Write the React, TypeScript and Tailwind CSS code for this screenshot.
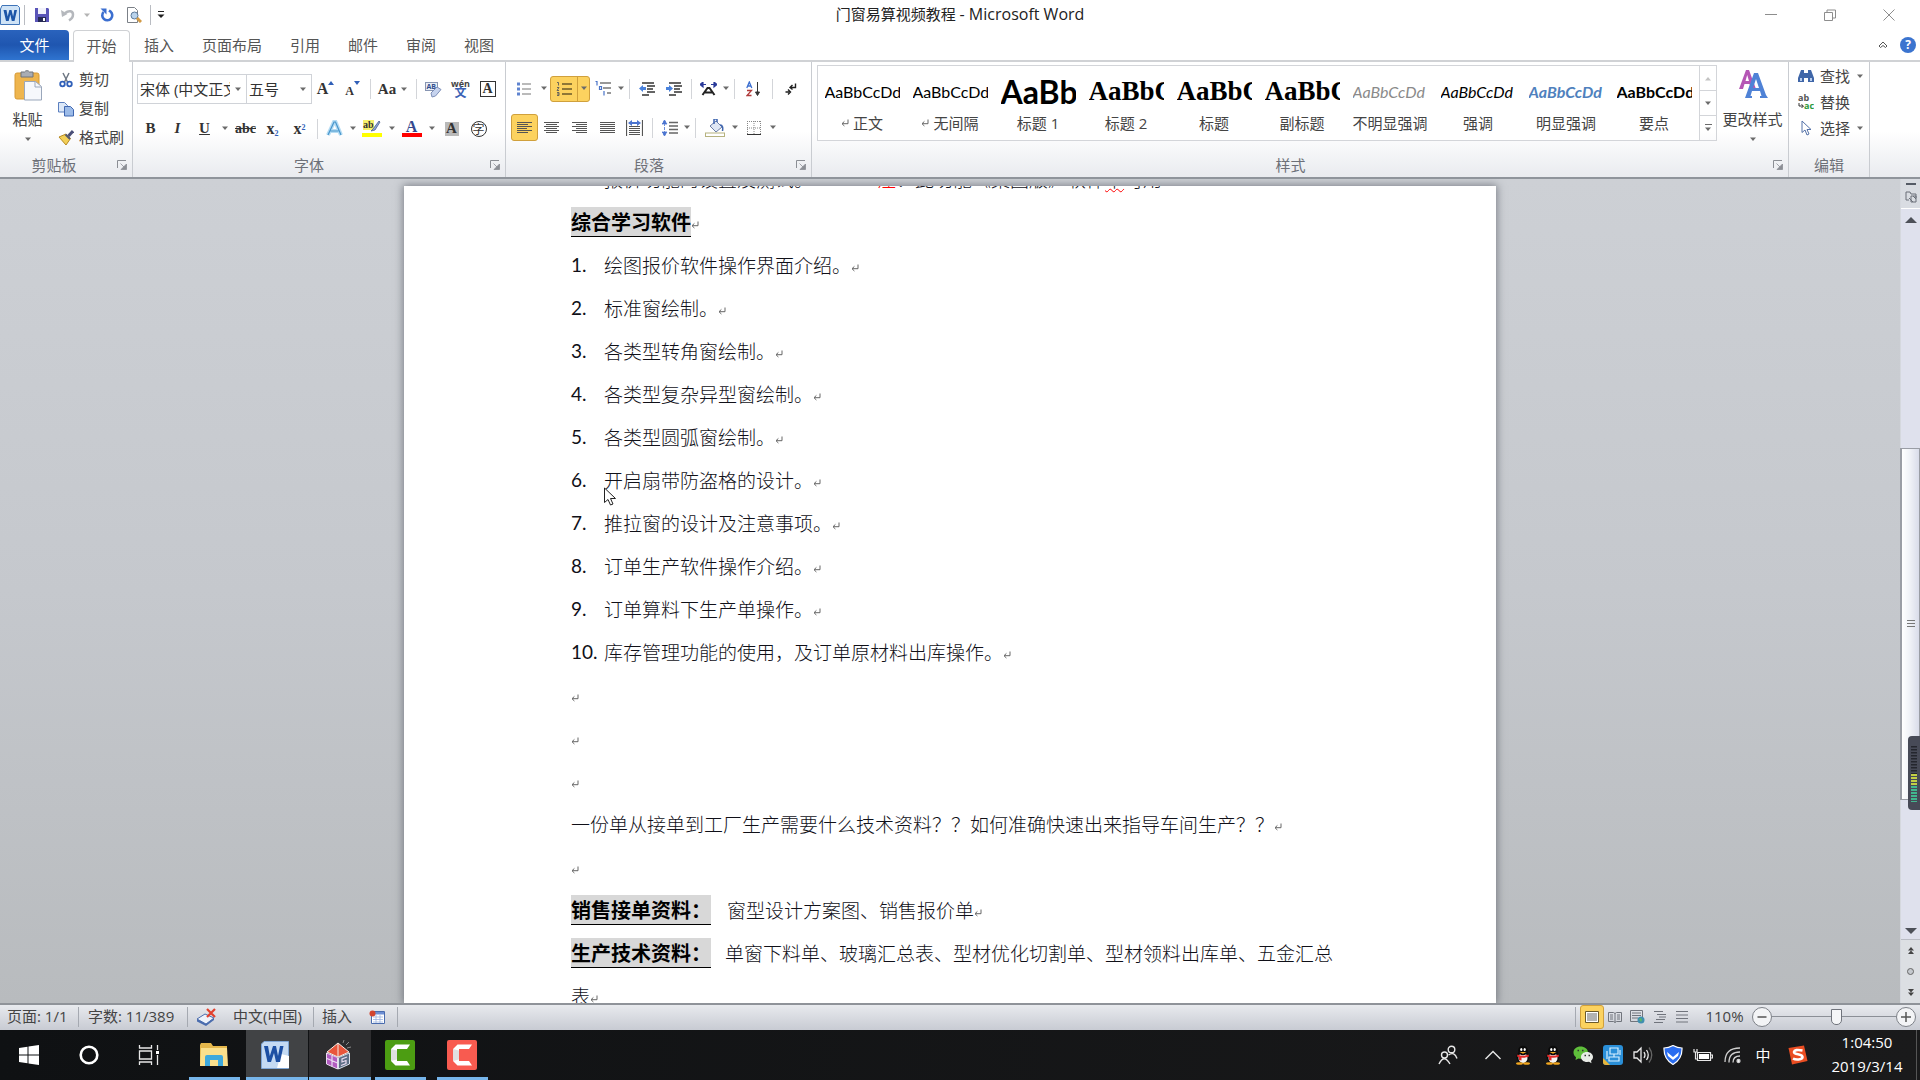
import React from 'react'
import clsx from 'clsx'

const UI = 'font-["Open_Sans","Noto_Sans_CJK_SC",sans-serif]'

type BoxProps = { className?: string; children?: React.ReactNode }

/* ---------- small shared pieces ---------- */

const Arrow: React.FC<{ className?: string }> = ({ className }) => (
  <svg viewBox="0 0 8 5" className={clsx('h-[5px] w-2 shrink-0', className)}>
    <path d="M1 0.5h6L4 4z" fill="#6b6b6b" />
  </svg>
)

const Sep: React.FC = () => (
  <div className="flex w-2 shrink-0 justify-center">
    <div className="h-5 w-px bg-[#d3d5d9]"></div>
  </div>
)

const Tool: React.FC<BoxProps & { label: string }> = ({ label, className, children }) => (
  <button aria-label={label} className={clsx('flex h-[27px] shrink-0 items-center justify-center', className ? className : 'w-[27px]')}>
    {children}
  </button>
)

const Pilcrow: React.FC<{ className?: string }> = ({ className }) => (
  <svg viewBox="0 0 8 8" className={clsx('inline-block h-2 w-2', className)}>
    <path d="M7 0.5v4.2H1.2M3.4 2.4L1 4.7l2.4 2.3" fill="none" stroke="#666" strokeWidth="1" />
  </svg>
)

const Group: React.FC<BoxProps & { name: string; launcher?: boolean }> = ({ name, launcher, className, children }) => (
  <section className={clsx('relative flex flex-col border-r border-[#c9ccd1]', className)}>
    <div className="flex-1">{children}</div>
    <div className={clsx('text-center text-[15px] leading-6 text-[#6d7078]', launcher && 'pr-6')}>{name}</div>
    {launcher && (
      <button aria-label={name + '设置'} className="absolute right-[5px] bottom-[7px]">
        <svg viewBox="0 0 10 10" className="h-[10px] w-[10px]">
          <path d="M0.5 8V0.5H9" fill="none" stroke="#8b8e94" />
          <path d="M9.5 4v5.5H4zM3.5 3.5L8 8" fill="#8b8e94" stroke="#8b8e94" strokeWidth="0.8" />
        </svg>
      </button>
    )}
  </section>
)

/* ---------- title bar ---------- */

const QuickAccess: React.FC = () => (
  <div className="flex flex-1 items-center">
    <svg viewBox="0 0 20 20" className="h-5 w-5">
      <path d="M2 0.5h15.500l2 2v17H0.500V4z" fill="#cfe3f6" stroke="#3f74b8" />
      <path d="M3.500 5h3l1.200 6.500L9.300 5h2.200l1.600 6.500L14.300 5h2.700l-2.500 11h-2.700l-1.500-6.500L8.700 16H6z" fill="#1d56a8" />
    </svg>
    <div className="ml-1 h-5 w-px bg-[#b9bcc2]"></div>
    <button aria-label="保存" className="ml-[9px]">
      <svg viewBox="0 0 16 16" className="h-4 w-4">
        <path d="M1 1h13l1 1v13H1z" fill="#5a55b8" />
        <path d="M4 1h8v6H4z" fill="#f2f2fb" />
        <path d="M4 10h8v5H4z" fill="#262a55" />
        <path d="M9 11h2v3H9z" fill="#fff" />
      </svg>
    </button>
    <button aria-label="撤消" className="ml-[11px]">
      <svg viewBox="0 0 14 14" className="h-[14px] w-[14px]">
        <path d="M4 5c4-3 8-2 8 1.500 0 2.500-1.500 4.500-4 6" fill="none" stroke="#b5b8bd" strokeWidth="2.500" />
        <path d="M0 2l1 7 5.500-3z" fill="#b5b8bd" />
      </svg>
    </button>
    <Arrow className="ml-2 opacity-50" />
    <button aria-label="重复" className="ml-[9px]">
      <svg viewBox="0 0 14 14" className="h-[14px] w-[14px]">
        <path d="M3.500 4a5 5 0 1 0 7-0.500L9 2.500" fill="none" stroke="#3c6fd0" strokeWidth="2.600" />
        <path d="M0.500 0.500h6v6z" fill="#3c6fd0" />
      </svg>
    </button>
    <button aria-label="打印预览" className="ml-3">
      <svg viewBox="0 0 16 16" className="h-4 w-4">
        <path d="M1.500 0.500h7l3 3v12h-10z" fill="#fff" stroke="#7b8087" />
        <circle cx="8.500" cy="8.500" r="3.500" fill="#b9d3ec" stroke="#5c7a99" />
        <path d="M11 11l4 4" stroke="#d29a45" strokeWidth="3" />
      </svg>
    </button>
    <div className="ml-2 h-5 w-px bg-[#b9bcc2]"></div>
    <button aria-label="自定义快速访问工具栏" className="ml-[6px]">
      <svg viewBox="0 0 8 8" className="h-2 w-2">
        <path d="M1 0.500h6" stroke="#222" />
        <path d="M0.500 3.500h7L4 7z" fill="#222" />
      </svg>
    </button>
  </div>
)

const TitleBar: React.FC = () => (
  <header className="flex h-[30px] shrink-0 items-center">
    <div className="flex h-[25px] flex-1">
      <QuickAccess />
    </div>
    <h1 className="-mt-0.5 text-[15px] text-[#222]">
      门窗易算视频教程 <span className="text-base">- Microsoft Word</span>
    </h1>
    <div className="flex flex-1 items-center justify-end gap-[47px] text-[#8d8d8d]">
      <button aria-label="最小化">
        <svg viewBox="0 0 12 12" className="h-3 w-3"><path d="M0 5.500h12" stroke="currentColor" /></svg>
      </button>
      <button aria-label="向下还原">
        <svg viewBox="0 0 12 12" className="h-3 w-3">
          <path d="M0.500 3.500h8v8h-8zM3 3V1h8.500v8H9" fill="none" stroke="currentColor" />
        </svg>
      </button>
      <button aria-label="关闭" className="mr-[25px]">
        <svg viewBox="0 0 12 12" className="h-3 w-3"><path d="M0.500 0.500l11 11M11.500 0.500l-11 11" stroke="currentColor" /></svg>
      </button>
    </div>
  </header>
)

const tabs = ['插入', '页面布局', '引用', '邮件', '审阅', '视图']

const TabRow: React.FC = () => (
  <nav className="flex h-8 shrink-0 items-stretch border-b-2 border-[#d0d2d5] text-[15px] text-[#555]">
    <button className="w-[69px] rounded-tr-sm bg-linear-to-b from-[#2a63bd] via-[#1f56b0] to-[#2f74d0] text-white">文件</button>
    <button className="-mb-0.5 ml-1 w-[57px] rounded-t-sm border border-b-0 border-[#cfd1d4] bg-white">开始</button>
    {tabs.map((t) => (
      <button key={t} className="px-[14px]">
        {t}
      </button>
    ))}
    <div className="flex flex-1 items-center justify-end gap-3 pr-1">
      <button aria-label="功能区最小化">
        <svg viewBox="0 0 10 8" className="h-2 w-[10px]">
          <path d="M1 5l4-4 4 4-1.500 1.500L5 4.500 2.500 6.500z" fill="none" stroke="#555" />
        </svg>
      </button>
      <button aria-label="帮助" className="flex h-4 w-4 items-center justify-center rounded-full bg-[#3b74cf] text-xs font-bold text-white">
        ?
      </button>
    </div>
  </nav>
)

/* ---------- ribbon ---------- */

const ClipboardGroup: React.FC = () => (
  <Group name="剪贴板" launcher className="w-[133px]">
    <div className="flex text-[15px] text-[#444]">
      <button className="flex w-[55px] flex-col items-center pt-[7px]">
        <svg viewBox="0 0 28 32" className="h-8 w-7">
          <rect x="1" y="4" width="24" height="26" rx="2" fill="#eeb54e" stroke="#d79a35" />
          <path d="M7 3h3.500a3 3 0 0 1 5 0H19v5H7z" fill="#a9adb4" stroke="#70747b" />
          <path d="M10.500 12.500h11l6 5v13.500h-17z" fill="#f6f8fc" stroke="#9aa7bb" />
          <path d="M21 12.500v5.500h6" fill="none" stroke="#9aa7bb" />
        </svg>
        <span className="mt-[6px] leading-6">粘贴</span>
        <Arrow className="mt-[6px]" />
      </button>
      <div className="flex flex-col items-start pt-[3px]">
        <button className="flex h-[29px] items-center gap-[5px] pl-[3px]">
          <svg viewBox="0 0 16 16" className="h-4 w-4">
            <path d="M5 1l4.500 9M11 1L6.500 10" stroke="#6f7884" strokeWidth="1.500" />
            <circle cx="4.500" cy="12" r="2.300" fill="none" stroke="#2f5fb8" strokeWidth="1.800" />
            <circle cx="11.500" cy="12" r="2.300" fill="none" stroke="#2f5fb8" strokeWidth="1.800" />
          </svg>
          剪切
        </button>
        <button className="flex h-[29px] items-center gap-[5px] pl-[3px]">
          <svg viewBox="0 0 16 16" className="h-4 w-4">
            <path d="M0.500 1.500h6l3 3v6.500h-9z" fill="#dce8f8" stroke="#5b7fbf" />
            <path d="M6.500 5.500h6l3 3v6.500h-9z" fill="#9cbbe8" stroke="#3f66b0" />
          </svg>
          复制
        </button>
        <button className="flex h-[29px] items-center gap-[5px] pl-[3px]">
          <svg viewBox="0 0 16 16" className="h-4 w-4">
            <path d="M15 1l-4.500 5" stroke="#4a4f78" strokeWidth="3" />
            <path d="M1 7l7-3 4.500 4.500L8 15z" fill="#f2cf57" stroke="#b78b22" />
            <path d="M7.500 4.500l4.500 4.500" stroke="#555a6e" strokeWidth="2" />
          </svg>
          格式刷
        </button>
      </div>
    </div>
  </Group>
)

const FontGroup: React.FC = () => (
  <Group name="字体" launcher className="w-[373px] pl-1">
    <div className="flex items-center pt-3">
      <div className="flex h-[30px] text-[15px] text-[#333]">
        <label className="relative flex w-[110px] items-center border border-[#d0d3d8]">
          <select aria-label="字体" className="w-[92px] appearance-none overflow-hidden pl-0.5 whitespace-nowrap outline-none">
            <option>宋体 (中文正文)</option>
          </select>
          <Arrow className="absolute right-1" />
        </label>
        <label className="relative -ml-px flex w-[66px] items-center border border-[#d0d3d8]">
          <select aria-label="字号" className="w-12 appearance-none pl-0.5 outline-none">
            <option>五号</option>
          </select>
          <Arrow className="absolute right-1" />
        </label>
      </div>
      <Tool label="增大字体">
        <span className="font-['Liberation_Serif',serif] text-base font-bold text-[#333]">A</span>
        <svg viewBox="0 0 6 4" className="-mt-3 h-1 w-[6px]"><path d="M0 4l3-4 3 4z" fill="#2f5fb8" /></svg>
      </Tool>
      <Tool label="缩小字体">
        <span className="mt-1 font-['Liberation_Serif',serif] text-xs font-bold text-[#333]">A</span>
        <svg viewBox="0 0 6 4" className="-mt-3 h-1 w-[6px]"><path d="M0 0l3 4 3-4z" fill="#2f5fb8" /></svg>
      </Tool>
      <Sep />
      <Tool label="更改大小写" className="w-[38px] gap-1">
        <span className="font-['Liberation_Serif',serif] text-[15px] font-bold text-[#333]">Aa</span>
        <Arrow />
      </Tool>
      <Sep />
      <Tool label="清除格式">
        <svg viewBox="0 0 17 17" className="h-[17px] w-[17px]">
          <rect x="0.500" y="1.500" width="12" height="8" fill="#e9edf5" stroke="#8795b2" />
          <text x="1.500" y="8" fontSize="7" fontWeight="bold" fill="#2f4f8f">AB</text>
          <path d="M6 12l6-6 4 2.500-5.500 6.500L7 16z" fill="#c6d3ee" stroke="#7d8fb8" />
        </svg>
      </Tool>
      <Tool label="拼音指南" className="w-[27px] flex-col">
        <span className="text-[9px] leading-[6px] font-bold text-[#444]">wén</span>
        <span className="text-xs leading-[11px] font-bold text-[#3a62b5]">文</span>
      </Tool>
      <Tool label="字符边框">
        <span className="flex h-4 w-4 items-center justify-center border border-[#333] font-['Liberation_Serif',serif] text-sm font-bold text-[#333]">A</span>
      </Tool>
    </div>
    <div className="flex items-center pt-[11px] font-['Liberation_Serif',serif] text-[#333]">
      <Tool label="加粗"><b className="text-[15px]">B</b></Tool>
      <Tool label="倾斜"><b className="text-[15px] italic">I</b></Tool>
      <Tool label="下划线"><b className="text-[15px] underline">U</b></Tool>
      <Tool label="下划线类型" className="w-[14px]"><Arrow /></Tool>
      <Tool label="删除线"><b className="text-sm line-through">abc</b></Tool>
      <Tool label="下标"><b className="text-base">x<sub className="text-[8px] text-[#2f5fb8]">2</sub></b></Tool>
      <Tool label="上标"><b className="text-base">x<sup className="text-[8px] text-[#2f5fb8]">2</sup></b></Tool>
      <Sep />
      <Tool label="文本效果">
        <svg viewBox="0 0 17 17" className="h-[17px] w-[17px]">
          <path d="M2 15L8 2h1.500l5.500 13M4.500 11h8" fill="none" stroke="#b5dcf3" strokeWidth="4" />
          <path d="M2 15L8 2h1.500l5.500 13M4.500 11h8" fill="none" stroke="#4795cc" strokeWidth="1.200" />
        </svg>
      </Tool>
      <Tool label="文本效果选项" className="w-[10px]"><Arrow /></Tool>
      <Tool label="突出显示">
        <span className="flex w-5 flex-col">
          <svg viewBox="0 0 20 13" className="h-[13px] w-5">
            <rect x="1" y="0" width="11" height="10" fill="#f6f06a" />
            <text x="1" y="8" fontSize="10" fontWeight="bold" fill="#333">ab</text>
            <path d="M17 1l-6 8-2 2 4-1 5-8z" fill="#8ba6d8" stroke="#4c5f8d" strokeWidth="0.800" />
          </svg>
          <span className="h-1 bg-[#ffff00]"></span>
        </span>
      </Tool>
      <Tool label="突出显示颜色" className="w-[13px]"><Arrow /></Tool>
      <Tool label="字体颜色">
        <span className="flex w-5 flex-col items-center">
          <b className="text-base leading-[13px] text-[#34498f]">A</b>
          <span className="h-1 w-5 bg-[#ff0000]"></span>
        </span>
      </Tool>
      <Tool label="字体颜色选项" className="w-[13px]"><Arrow /></Tool>
      <Tool label="字符底纹">
        <b className="flex h-[14px] w-[14px] items-center justify-center bg-[#b9b9b9] text-[15px]">A</b>
      </Tool>
      <Tool label="带圈字符">
        <span className="flex h-4 w-4 items-center justify-center rounded-full border border-[#333] font-['Noto_Sans_CJK_SC',sans-serif] text-xs leading-none">字</span>
      </Tool>
    </div>
  </Group>
)

const alignPaths = {
  left: 'M0 1.500h15M0 3.500h11M0 5.500h15M0 7.500h10M0 9.500h15M0 11.500h11',
  center: 'M0 1.500h15M2 3.500h11M0 5.500h15M2 7.500h11M0 9.500h15M2 11.500h11',
  right: 'M0 1.500h15M4 3.500h11M0 5.500h15M4 7.500h11M0 9.500h15M4 11.500h11',
  full: 'M0 1.500h15M0 3.500h15M0 5.500h15M0 7.500h15M0 9.500h15M0 11.500h15',
}

const Lines: React.FC<{ d: string }> = ({ d }) => (
  <svg viewBox="0 0 15 13" className="h-[13px] w-[15px]"><path d={d} stroke="#555" strokeWidth="1.200" /></svg>
)

const IndentIcon: React.FC<{ out?: boolean }> = ({ out }) => (
  <svg viewBox="0 0 16 14" className="h-[14px] w-4">
    <path d="M3 1h12M8 4h8M8 7h6M8 10h8M3 13h7" stroke="#333" strokeWidth="1.600" />
    <path d={out ? 'M0 6.500l4-3.500v2h3v3H4v2z' : 'M7 6.500L3 3v2H0v3h3v2z'} fill="#4a82dc" />
  </svg>
)

const ParagraphGroup: React.FC = () => (
  <Group name="段落" launcher className="w-[306px] pl-[5px]">
    <div className="flex items-center pt-[13px]">
      <Tool label="项目符号">
        <svg viewBox="0 0 15 14" className="h-[14px] w-[15px]">
          <path d="M5 2h9M5 7h9M5 12h9" stroke="#777" strokeWidth="1.200" />
          <path d="M0 0.500h3v3H0zM0 5.500h3v3H0zM0 10.500h3v3H0z" fill="#5f84d0" />
        </svg>
      </Tool>
      <Tool label="项目符号库" className="w-3"><Arrow /></Tool>
      <span className="flex rounded-[3px] border border-[#d0a03c] bg-[#fcd25f]">
        <button aria-label="编号" className="flex h-6 w-[26px] items-center justify-center">
          <svg viewBox="0 0 16 14" className="h-[14px] w-4">
            <path d="M6 2h10M6 7h10M6 12h10" stroke="#6b5a2a" strokeWidth="1.400" />
            <path d="M1 0.500h1.500v3M1 5.500h2l-2 3h2M1 10.500h2v3H1M3 12H1" fill="none" stroke="#5a5a5a" strokeWidth="0.900" />
          </svg>
        </button>
        <button aria-label="编号库" className="flex h-6 w-3 items-center justify-center border-l border-[#d0a03c]"><Arrow /></button>
      </span>
      <Tool label="多级列表">
        <svg viewBox="0 0 17 15" className="h-[15px] w-[17px]">
          <path d="M5 2h11M8 7h8M12 12h4" stroke="#777" strokeWidth="1.300" />
          <path d="M0.500 0.500h1.500v4M4.500 5.500h2v3h-2zM9 10v4.500" fill="none" stroke="#4a74c8" strokeWidth="1.200" />
        </svg>
      </Tool>
      <Tool label="多级列表库" className="w-[8px]"><Arrow /></Tool>
      <Sep />
      <Tool label="减少缩进量"><IndentIcon out /></Tool>
      <Tool label="增加缩进量"><IndentIcon /></Tool>
      <Sep />
      <Tool label="中文版式">
        <svg viewBox="0 0 17 14" className="h-[14px] w-[17px]">
          <path d="M2.500 13l5-7h2l5 7M5 10.500h7" fill="none" stroke="#222" strokeWidth="2" />
          <path d="M0 2.500l3-2.500v5zM17 2.500l-3-2.500v5zM2 2.500h4M11 2.500h4" fill="#2a3a9a" stroke="#2a3a9a" strokeWidth="1.200" />
        </svg>
      </Tool>
      <Tool label="中文版式选项" className="w-2"><Arrow /></Tool>
      <Sep />
      <Tool label="排序" className="w-[30px]">
        <svg viewBox="0 0 15 16" className="h-4 w-[15px]">
          <path d="M0.800 7l2.500-6 2.500 6M1.500 5h3.600" fill="none" stroke="#3c6fd0" strokeWidth="1.300" />
          <path d="M1 9.500h4.500L1 14.500h4.500" fill="none" stroke="#b03a3a" strokeWidth="1.300" />
          <path d="M11.500 1v11M9.500 11l2 3.500 2-3.500z" fill="#333" stroke="#333" />
        </svg>
      </Tool>
      <Sep />
      <Tool label="显示编辑标记" className="w-[30px]">
        <svg viewBox="0 0 12 12" className="h-3 w-3">
          <path d="M10.500 0.500v4H6M7.500 2L5 4.500l2.500 2M0.500 9h4M3 6.500L5.500 9 3 11.500" fill="none" stroke="#222" strokeWidth="1.400" />
        </svg>
      </Tool>
    </div>
    <div className="flex items-center pt-3">
      <Tool label="左对齐" className="w-[27px] rounded-[3px] border border-[#d0a03c] bg-[#fcd25f]"><Lines d={alignPaths.left} /></Tool>
      <Tool label="居中"><Lines d={alignPaths.center} /></Tool>
      <Tool label="右对齐" className="w-7"><Lines d={alignPaths.right} /></Tool>
      <Tool label="两端对齐" className="w-7"><Lines d={alignPaths.full} /></Tool>
      <Tool label="分散对齐">
        <svg viewBox="0 0 17 16" className="h-4 w-[17px]">
          <path d="M0.500 0v16M16.500 0v16M3 6.500h11M3 8.500h11M3 10.500h11M3 12.500h11M3 14.500h11" stroke="#555" strokeWidth="1.200" />
          <path d="M2 3l4-3v2h5V0l4 3-4 3V4H6v2z" fill="#4a74d0" />
        </svg>
      </Tool>
      <Sep />
      <Tool label="行距">
        <svg viewBox="0 0 16 16" className="h-4 w-4">
          <path d="M7 2.500h9M7 6h9M7 9.500h9M7 13h9" stroke="#666" strokeWidth="1.300" />
          <path d="M2.500 0L5 4H0zM2.500 16L5 12H0zM2.500 3v10" fill="#4a74d0" stroke="#4a74d0" strokeWidth="0.800" strokeDasharray="3 1" />
        </svg>
      </Tool>
      <Tool label="行距选项" className="w-2"><Arrow /></Tool>
      <Sep />
      <Tool label="底纹" className="w-8">
        <svg viewBox="0 0 20 18" className="h-[18px] w-5">
          <path d="M5 7l6-5 6 6-6 5z" fill="#dfe7f4" stroke="#6a7da5" />
          <path d="M9 5V0h3v3M15 6c3 0 3 3 2.500 6" fill="none" stroke="#3f66b0" strokeWidth="1.500" />
          <rect x="0.500" y="14" width="19" height="3.500" fill="#fff" stroke="#b6b27e" />
        </svg>
      </Tool>
      <Tool label="底纹颜色" className="w-[8px]"><Arrow /></Tool>
      <Tool label="框线" className="w-[30px]">
        <svg viewBox="0 0 14 14" className="h-[14px] w-[14px]">
          <path d="M0.500 0v13M7 0v13M13.500 0v13M0 0.500h14M0 7h14" stroke="#888" strokeDasharray="1 1" />
          <path d="M0 13.500h14" stroke="#333" />
        </svg>
      </Tool>
      <Tool label="框线选项" className="w-[8px]"><Arrow /></Tool>
    </div>
  </Group>
)

const styles = [
  { name: '正文', mark: true, sample: 'AaBbCcDd', cls: 'text-base text-black' },
  { name: '无间隔', mark: true, sample: 'AaBbCcDd', cls: 'text-base text-black' },
  { name: '标题 1', sample: 'AaBb', cls: 'text-[32px] font-bold text-black' },
  { name: '标题 2', sample: 'AaBbC', cls: 'font-["Liberation_Serif",serif] text-[27px] font-bold text-black' },
  { name: '标题', sample: 'AaBbC', cls: 'font-["Liberation_Serif",serif] text-[27px] font-bold text-black' },
  { name: '副标题', sample: 'AaBbC', cls: 'font-["Liberation_Serif",serif] text-[27px] font-bold text-black' },
  { name: '不明显强调', sample: 'AaBbCcDd', cls: 'text-base text-[#8a8a8a] italic' },
  { name: '强调', sample: 'AaBbCcDd', cls: 'text-base text-black italic' },
  { name: '明显强调', sample: 'AaBbCcDd', cls: 'text-base font-bold text-[#4f81bd] italic' },
  { name: '要点', sample: 'AaBbCcDd', cls: 'text-base font-bold text-black' },
]

const StylesGroup: React.FC = () => (
  <Group name="样式" launcher className="min-w-0 flex-1 pl-[5px]">
    <div className="flex pt-[3px]">
      <div className="flex h-[76px] min-w-0 flex-1 overflow-hidden border border-[#d3d5d9] bg-white">
        {styles.map((s) => (
          <button key={s.name} className="flex w-[88px] shrink-0 flex-col items-center">
            <span className={clsx('mt-[6px] flex h-[39px] w-[75px] items-center overflow-hidden whitespace-nowrap', s.cls.includes('Serif') ? '' : 'font-["Lato",sans-serif]', s.cls)}>{s.sample}</span>
            <span className="flex items-center gap-1 text-[15px] leading-6 whitespace-nowrap text-[#444]">
              {s.mark && <Pilcrow />}
              {s.name}
            </span>
          </button>
        ))}
      </div>
      <div className="flex h-[76px] w-[17px] flex-col divide-y divide-[#d3d5d9] border border-l-0 border-[#d3d5d9]">
        <button aria-label="上一行" className="flex flex-1 items-center justify-center"><Arrow className="rotate-180 opacity-40" /></button>
        <button aria-label="下一行" className="flex flex-1 items-center justify-center"><Arrow /></button>
        <button aria-label="其他" className="flex flex-1 flex-col items-center justify-center gap-0.5">
          <span className="h-px w-[7px] bg-[#6b6b6b]"></span>
          <Arrow />
        </button>
      </div>
      <button className="flex w-[71px] flex-col items-center pt-1 text-[15px] text-[#444]">
        <svg viewBox="0 0 30 30" className="h-[30px] w-[30px]">
          <path d="M1 20L8 1h3l7 19h-5l-1.500-5H6.500L5 20zM7.500 12h3.500L9.200 6z" fill="#b556b5" />
          <path d="M7 29l9-25h4l8 22 2 3h-8v-2h1.500l-1.500-5h-8l-1.500 5H14v2zM15 19h6L18 10z" fill="#4f82d6" />
        </svg>
        <span className="mt-2 leading-6">更改样式</span>
        <Arrow className="mt-[6px]" />
      </button>
    </div>
  </Group>
)

const EditingGroup: React.FC = () => (
  <Group name="编辑" className="w-[81px]">
    <div className="flex flex-col pt-px pl-[9px] text-[15px] text-[#444]">
      <button className="flex h-[26px] items-center gap-[6px]">
        <svg viewBox="0 0 16 14" className="h-[14px] w-4">
          <path d="M3 1h3v3h4V1h3l3 8v4h-6V9H6v4H0V9z" fill="#3f66a8" />
          <path d="M2 9h2v3H2zM12 9h2v3h-2z" fill="#b8cdee" />
        </svg>
        查找
        <Arrow />
      </button>
      <button className="flex h-[26px] items-center gap-[6px]">
        <svg viewBox="0 0 16 16" className="h-4 w-4">
          <text x="0" y="7" fontSize="9" fontWeight="bold" fill="#555">ab</text>
          <text x="6" y="15" fontSize="9" fontWeight="bold" fill="#2c9a3c">ac</text>
          <path d="M1 9v3h4M3.500 10.500L5.500 12l-2 2" fill="none" stroke="#333" />
        </svg>
        替换
      </button>
      <button className="flex h-[26px] items-center gap-[6px]">
        <svg viewBox="0 0 16 16" className="h-4 w-4">
          <path d="M4 1v11.500l3-2.500 2 5 2-1-2-4.500h4z" fill="#fff" stroke="#5572a8" />
        </svg>
        选择
        <Arrow />
      </button>
    </div>
  </Group>
)

const Ribbon: React.FC = () => (
  <div className="flex h-[117px] shrink-0 border-b-2 border-[#8f949b] bg-linear-to-b from-white via-white via-60% to-[#e9ebef]">
    <ClipboardGroup />
    <FontGroup />
    <ParagraphGroup />
    <StylesGroup />
    <EditingGroup />
    <div className="w-[50px]"></div>
  </div>
)

/* ---------- document ---------- */

const items = [
  '绘图报价软件操作界面介绍。',
  '标准窗绘制。',
  '各类型转角窗绘制。',
  '各类型复杂异型窗绘制。',
  '各类型圆弧窗绘制。',
  '开启扇带防盗格的设计。',
  '推拉窗的设计及注意事项。',
  '订单生产软件操作介绍。',
  '订单算料下生产单操作。',
  '库存管理功能的使用，及订单原材料出库操作。',
]

const Heading: React.FC<BoxProps> = ({ children }) => (
  <span className="border-b border-black bg-[#d8d8d8] text-[20px] leading-[22px] font-bold text-black">{children}</span>
)

const Numbered: React.FC<BoxProps & { n: number }> = ({ n, children }) => (
  <li className="flex whitespace-pre">
    <span className='w-[33px] shrink-0 font-["Lato",sans-serif] font-normal'>{n}.</span>
    <span>
      {children}
      <Pilcrow />
    </span>
  </li>
)

const Empty: React.FC = () => (
  <p>
    <Pilcrow />
  </p>
)

const Page: React.FC = () => (
  <div className="relative mx-auto mt-[7px] w-full max-w-[1092px] flex-1 overflow-hidden bg-white shadow-[0_0_8px_1px_rgba(70,75,85,0.6)]">
    <article className='-mt-[29px] pr-[150px] pl-[167px] font-["Noto_Sans_CJK_SC",sans-serif] text-[19px] leading-[43px] font-light text-[#101018]'>
      <ol>
        <Numbered n={3}>
          报价功能的设置及测试。
          <span className="ml-16 text-[#ff0000]">注</span>：此功能《集团版》软件
          <span className="underline decoration-[#ff0000] decoration-wavy decoration-1">早</span>可用
        </Numbered>
      </ol>
      <h2>
        <Heading>综合学习软件</Heading>
        <Pilcrow />
      </h2>
      <ol>
        {items.map((text, i) => (
          <Numbered key={text} n={i + 1}>
            {text}
          </Numbered>
        ))}
      </ol>
      <Empty />
      <Empty />
      <Empty />
      <p>
        一份单从接单到工厂生产需要什么技术资料？？如何准确快速出来指导车间生产？？
        <Pilcrow />
      </p>
      <Empty />
      <p>
        <Heading>销售接单资料：</Heading>
        <span className="ml-4">窗型设计方案图、销售报价单</span>
        <Pilcrow />
      </p>
      <p>
        <Heading>生产技术资料：</Heading>
        <span className="ml-[14px]">单窗下料单、玻璃汇总表、型材优化切割单、型材领料出库单、五金汇总表</span>
        <Pilcrow />
      </p>
    </article>
    {/* mouse pointer */}
    <svg viewBox="0 0 12 19" className="absolute top-[301px] left-[200px] h-[19px] w-3">
      <path d="M0.500 1v14.500l3.500-3 2.500 5.500 2.500-1-2.500-5.500h5z" fill="#fff" stroke="#222" />
    </svg>
  </div>
)

const ScrollBar: React.FC = () => (
  <div className="relative flex w-5 shrink-0 flex-col border-l border-[#d5d8de] bg-[#dfe1ed]">
    <div className="flex h-[30px] flex-col items-center gap-[6px] border-b border-white bg-[#d9dce2] pt-1">
      <span className="h-0.5 w-[10px] bg-[#555b66]"></span>
      <button aria-label="标尺">
        <svg viewBox="0 0 12 12" className="h-3 w-3">
          <path d="M1 1h4l1 2h5v4M1 1v8h3M6 5h5v6H6zM4 7l4 4M8 5l3 3" fill="none" stroke="#6a6f78" />
        </svg>
      </button>
    </div>
    <button aria-label="向上滚动" className="flex h-[22px] items-center justify-center">
      <svg viewBox="0 0 12 6" className="h-[6px] w-3"><path d="M0 6l6-6 6 6z" fill="#4d5058" /></svg>
    </button>
    <div className="flex flex-[218]"></div>
    <div className="-ml-px flex flex-[351] flex-col items-center justify-center gap-0.5 border border-l-2 border-[#9a9da5] bg-linear-to-r from-white via-[#eef0f6] to-[#d9dcea]">
      <span className="h-px w-2 bg-[#777]"></span>
      <span className="h-px w-2 bg-[#777]"></span>
      <span className="h-px w-2 bg-[#777]"></span>
    </div>
    <div className="flex flex-[123]"></div>
    <button aria-label="向下滚动" className="flex h-[17px] items-center justify-center">
      <svg viewBox="0 0 12 6" className="h-[6px] w-3"><path d="M0 0l6 6 6-6z" fill="#4d5058" /></svg>
    </button>
    <div className="flex h-16 flex-col items-center justify-around border-t border-[#b9bcc4] bg-[#dcdfe3]">
      <button aria-label="前一页">
        <svg viewBox="0 0 6 7" className="h-[7px] w-[6px]"><path d="M0 3.500L3 0l3 3.500zM0 7l3-3.500L6 7z" fill="#444" /></svg>
      </button>
      <button aria-label="选择浏览对象" className="h-[7px] w-[7px] rounded-full border border-[#666] bg-[#c5c9ce]"></button>
      <button aria-label="下一页">
        <svg viewBox="0 0 6 7" className="h-[7px] w-[6px]"><path d="M0 0l3 3.500L6 0zM0 3.500L3 7l3-3.500z" fill="#444" /></svg>
      </button>
    </div>
    {/* audio level meter docked to the screen edge */}
    <div className="absolute top-[557px] right-0 flex h-[74px] w-3 flex-col items-center justify-end rounded-l bg-[#474a57] pb-2">
      <svg viewBox="0 0 6 56" className="h-14 w-[6px]">
        <path d="M3 0v28" stroke="#24262e" strokeWidth="6" strokeDasharray="1.500 1.500" />
        <path d="M3 28v12" stroke="#c3cf45" strokeWidth="6" strokeDasharray="2 1" />
        <path d="M3 40v16" stroke="#41b88f" strokeWidth="6" strokeDasharray="2 1" />
      </svg>
    </div>
  </div>
)

/* ---------- status bar ---------- */

const StatusSep: React.FC = () => <div className="h-5 w-px bg-[#a5a9b1]"></div>

const StatusBar: React.FC = () => (
  <footer className="flex h-[27px] shrink-0 items-center border-t-2 border-[#8f9399] bg-linear-to-b from-[#e8eaee] to-[#c8cbd3] pb-0.5 text-[15px] text-[#444]">
    <button className="w-[78px] pl-[7px] text-left">页面: 1/1</button>
    <StatusSep />
    <button className="w-[108px] pl-[9px] text-left">字数: 11/389</button>
    <StatusSep />
    <button aria-label="校对" className="ml-2">
      <svg viewBox="0 0 20 18" className="h-[18px] w-5">
        <path d="M1 11l8-5 9 4-8 6z" fill="#eef3fb" stroke="#4a6cae" />
        <path d="M1 11v2.500l9 4.500 8-6V10l-8 6z" fill="#4a6cae" />
        <path d="M11 1l8 8M19 1l-8 8" stroke="#e2412e" strokeWidth="2.200" />
      </svg>
    </button>
    <button className="ml-[17px] w-20 text-left">中文(中国)</button>
    <StatusSep />
    <button className="ml-2">插入</button>
    <button aria-label="宏" className="mr-3 ml-[17px]">
      <svg viewBox="0 0 16 14" className="h-[14px] w-4">
        <path d="M2.500 1.500h13v12h-13z" fill="#fff" stroke="#4a6cae" />
        <path d="M3 2h12v2.500H3z" fill="#6d8fd4" />
        <path d="M4 7h10M4 9.500h10M4 12h10M7 5v8M11 5v8" stroke="#9db4e0" strokeWidth="0.800" />
        <circle cx="3.500" cy="3.500" r="3" fill="#d2452f" />
      </svg>
    </button>
    <StatusSep />
    <div className="flex-1"></div>
    <StatusSep />
    <button aria-label="页面视图" className="ml-1 flex h-6 w-6 items-center justify-center rounded-[3px] border border-[#d0a03c] bg-[#fcd25f]">
      <svg viewBox="0 0 14 12" className="h-3 w-[14px]">
        <path d="M0.500 0.500h13v11h-13z" fill="#fff" stroke="#6b5a2a" />
        <path d="M2 3h10M2 5h10M2 7h10M2 9h10" stroke="#666" />
      </svg>
    </button>
    <div className="flex items-center gap-2 px-1 text-[#70747c]">
      <button aria-label="阅读版式">
        <svg viewBox="0 0 14 12" className="h-3 w-[14px]">
          <path d="M0.500 1.500h5l1.500 1 1.500-1h5v9h-5l-1.500 1-1.500-1h-5zM7 2.500v9M2 4h3M2 6h3M2 8h3M9 4h3M9 6h3M9 8h3" fill="none" stroke="currentColor" />
        </svg>
      </button>
      <button aria-label="Web 版式">
        <svg viewBox="0 0 15 14" className="h-[14px] w-[15px]">
          <path d="M0.500 0.500h12v11h-12zM2 3h9M2 5.500h9M2 8h6" fill="none" stroke="currentColor" />
          <circle cx="11" cy="10" r="3.500" fill="#3f8fb0" />
          <path d="M9 9l2-1 1 2-1 2z" fill="#5fb861" />
        </svg>
      </button>
      <button aria-label="大纲视图">
        <svg viewBox="0 0 14 12" className="h-3 w-[14px]"><path d="M1 0.500h9M4 3.500h9M6 6h7M3 8.500h9M1 11.500h9" stroke="currentColor" /></svg>
      </button>
      <button aria-label="草稿">
        <svg viewBox="0 0 14 12" className="h-3 w-[14px]"><path d="M1 0.500h12M1 4h12M1 7.500h12M1 11h12" stroke="currentColor" /></svg>
      </button>
    </div>
    <button className="ml-2 w-[51px] pr-1 text-center">110%</button>
    <button aria-label="缩小" className="flex h-5 w-5 items-center justify-center rounded-full border border-[#7d8188] bg-[#f3f4f6]">
      <svg viewBox="0 0 10 10" className="h-[10px] w-[10px]"><path d="M0.500 5h9" stroke="#555" strokeWidth="1.500" /></svg>
    </button>
    <input
      type="range"
      aria-label="显示比例"
      min={0}
      max={100}
      defaultValue={52}
      className="h-5 w-[124px] appearance-none bg-transparent bg-[linear-gradient(#8b8f96,#8b8f96)] bg-[length:100%_1px] bg-center bg-no-repeat [&::-webkit-slider-thumb]:h-4 [&::-webkit-slider-thumb]:w-[11px] [&::-webkit-slider-thumb]:appearance-none [&::-webkit-slider-thumb]:rounded-b-[5px] [&::-webkit-slider-thumb]:border [&::-webkit-slider-thumb]:border-[#70747c] [&::-webkit-slider-thumb]:bg-[#f5f6f8]"
    />
    <button aria-label="放大" className="mr-1 flex h-5 w-5 items-center justify-center rounded-full border border-[#7d8188] bg-[#f3f4f6]">
      <svg viewBox="0 0 10 10" className="h-[10px] w-[10px]"><path d="M0 5h10M5 0v10" stroke="#555" strokeWidth="1.500" /></svg>
    </button>
  </footer>
)

/* ---------- taskbar ---------- */

const TaskApp: React.FC<BoxProps & { label: string; bar?: string }> = ({ label, bar, className, children }) => (
  <button aria-label={label} className={clsx('relative flex h-full w-[62px] items-center justify-center', className)}>
    {children}
    {bar && (
      <span className="absolute inset-x-0 bottom-0 flex justify-center">
        <span className={clsx('h-[3px] bg-[#76b5ea]', bar)}></span>
      </span>
    )}
  </button>
)

const Camtasia: React.FC<{ fill: string }> = ({ fill }) => (
  <svg viewBox="0 0 30 30" className="h-[30px] w-[30px]">
    <rect width="30" height="30" rx="2" fill={fill} />
    <path d="M25 4.500H10.500L6 9v12l4.500 4.500H25l-3-4.500H12V9h10z" fill="#fff" />
    <path d="M6 9l6 1.500v9L6 21z" fill="#000" opacity="0.120" />
  </svg>
)

const Penguin: React.FC = () => (
  <svg viewBox="0 0 16 20" className="h-5 w-4">
    <ellipse cx="8" cy="12" rx="6.500" ry="6.500" fill="#0a0a0a" />
    <ellipse cx="8" cy="13" rx="4.500" ry="5" fill="#f5f5f5" />
    <circle cx="8" cy="5.500" r="4.800" fill="#0a0a0a" />
    <ellipse cx="6.300" cy="4.500" rx="1.100" ry="1.500" fill="#fff" />
    <ellipse cx="9.700" cy="4.500" rx="1.100" ry="1.500" fill="#fff" />
    <path d="M4.500 7h7L8 8.800z" fill="#f0a51e" />
    <path d="M2.500 9.500q5.500 2.500 11 0l0.500 2q-6 2.500-12 0z" fill="#e02a2a" />
    <path d="M4 11.500h2.500v4L4 15z" fill="#e02a2a" />
    <ellipse cx="4.500" cy="18.500" rx="3.500" ry="1.300" fill="#f0a51e" />
    <ellipse cx="11.500" cy="18.500" rx="3.500" ry="1.300" fill="#f0a51e" />
  </svg>
)

const Tray: React.FC<BoxProps & { label: string }> = ({ label, children }) => (
  <button aria-label={label} className="flex h-full w-[30px] items-center justify-center">
    {children}
  </button>
)

const TaskBar: React.FC = () => (
  <div className="flex h-[50px] shrink-0 items-stretch bg-linear-to-r from-[#0f1113] to-[#1a1a1b] text-white">
    <TaskApp label="开始" className="pr-1">
      <svg viewBox="0 0 20 20" className="h-5 w-5">
        <path d="M0 3l8.500-1.200v7.700H0zM9.500 1.600L20 0v9.500H9.500zM0 10.500h8.500v7.700L0 17zM9.500 10.500H20V20L9.500 18.400z" fill="#fff" />
      </svg>
    </TaskApp>
    <TaskApp label="Cortana" className="pr-2">
      <svg viewBox="0 0 20 20" className="h-5 w-5"><circle cx="10" cy="10" r="8.300" fill="none" stroke="#fff" strokeWidth="2.600" /></svg>
    </TaskApp>
    <TaskApp label="任务视图" className="pr-3">
      <svg viewBox="0 0 22 20" className="h-5 w-[22px]">
        <path d="M1.500 0v3h12V0M1.500 6h12v8h-12zM1.500 20v-3h12v3M19.500 0v5M19.500 10v10" fill="none" stroke="#e8e8e8" strokeWidth="1.300" />
        <path d="M18 6h3v3h-3z" fill="#fff" />
      </svg>
    </TaskApp>
    <TaskApp label="文件资源管理器" bar="w-[51px]" className="mr-px -ml-[3px]">
      <svg viewBox="0 0 28 24" className="h-6 w-7">
        <path d="M0 2l1-2h10l2 3h14v20H0z" fill="#e5b74b" />
        <path d="M1 5h26l1 18H0z" fill="#fbe08c" />
        <path d="M5 23v-9q0-2 2-2h14q2 0 2 2v9h-5v-6h-8v6z" fill="#3fa9dc" />
      </svg>
    </TaskApp>
    <TaskApp label="Microsoft Word" bar="w-full" className="w-[61px] bg-[#414345] pr-1">
      <svg viewBox="0 0 28 28" className="h-7 w-7">
        <path d="M3 0.500h24.500v27H0.500V3z" fill="#c4daf3" stroke="#7fa6d6" />
        <path d="M16 27l4-14 8 2v12z" fill="#fff" />
        <path d="M3 5h4l1.800 10L12 5h3l2 10 2-10h3.500L19 21h-4l-2-9-3 9H6.500z" fill="#1c4fa3" />
      </svg>
    </TaskApp>
    <TaskApp label="3D" bar="w-full" className="ml-px w-[61px] bg-[#2d2d2f] pr-1">
      <svg viewBox="0 0 26 30" className="h-[30px] w-[26px]">
        <path d="M2 12l11-9 11 9-11 5z" fill="#e9563c" stroke="#f5ece4" />
        <path d="M13 3v14" stroke="#f5ece4" />
        <path d="M1.500 13L12.500 17.500V29l-11-5z" fill="#b25cc0" stroke="#eadcf0" />
        <path d="M24.500 13l-11 4.500V29l11-5z" fill="#5e6f86" stroke="#d9e0ea" />
        <path d="M7 15.500v11M2 18.500l10.500 4.500M22 17l-5 2v3l4-1.500v3l-5 2" fill="none" stroke="#eadcf0" strokeWidth="1.200" />
        <path d="M18 3l1-3M21 5l3-3M22 8l4-1" stroke="#8b8b8b" />
      </svg>
    </TaskApp>
    <TaskApp label="Camtasia" bar="w-[51px]" className="-ml-0.5">
      <Camtasia fill="#4c9d12" />
    </TaskApp>
    <TaskApp label="Camtasia Recorder" bar="w-[51px]">
      <Camtasia fill="#f85b50" />
    </TaskApp>
    <div className="flex-1"></div>
    <button aria-label="人脉" className="flex w-[60px] items-center justify-center">
      <svg viewBox="0 0 20 20" className="h-5 w-5" fill="none" stroke="#e8e8e8" strokeWidth="1.400">
        <circle cx="13.500" cy="4.500" r="3.300" />
        <path d="M10.500 10q6-4 8.500 3.500" />
        <circle cx="6.500" cy="10" r="3" />
        <path d="M1 19q5-10.500 11 0" />
      </svg>
    </button>
    <Tray label="显示隐藏的图标">
      <svg viewBox="0 0 16 10" className="h-[10px] w-4"><path d="M0.500 9L8 1.500 15.500 9" fill="none" stroke="#e8e8e8" strokeWidth="1.400" /></svg>
    </Tray>
    <Tray label="QQ"><Penguin /></Tray>
    <Tray label="QQ"><Penguin /></Tray>
    <Tray label="微信">
      <svg viewBox="0 0 20 18" className="h-[18px] w-5">
        <path d="M7.500 0.500c-4 0-7 2.500-7 6 0 2 1 3.500 2.500 4.700L2.500 14l3-1.500q5 1 7.500-1.500 2-2 2-4.500c0-3.500-3.500-6-7.500-6z" fill="#5fbf3b" />
        <path d="M14 6c-3.500 0-6 2.200-6 5s2.500 5 6 5l2-0.300 2.500 1.500-0.500-2.400C19.300 13.800 20 12.500 20 11c0-2.800-2.500-5-6-5z" fill="#e9ece7" />
        <path d="M4.500 4.500h1.500M9 4.500h1.500M11.500 9.500H13M15.500 9.500H17" stroke="#333" strokeWidth="1.300" />
      </svg>
    </Tray>
    <Tray label="宽带">
      <svg viewBox="0 0 20 20" className="h-5 w-5">
        <rect width="20" height="20" rx="3" fill="#2a8fd8" />
        <path d="M0 13l7 7H3q-3 0-3-3z" fill="#e7b53a" />
        <path d="M7 3h8v6H7zM6 12h10v4H6zM11 9v3M4 6v8M17 5v5" fill="none" stroke="#d6efff" strokeWidth="1.200" />
      </svg>
    </Tray>
    <Tray label="扬声器">
      <svg viewBox="0 0 20 18" className="h-[18px] w-5" fill="none" stroke="#e8e8e8" strokeWidth="1.300">
        <path d="M1 6h3l4-4v14l-4-4H1zM11 6q2 3 0 6" />
        <path d="M13.500 4q3.500 5 0 10" />
        <path d="M16 1.500q5.500 7.500 0 15" stroke="#666" />
      </svg>
    </Tray>
    <Tray label="电脑管家">
      <svg viewBox="0 0 20 20" className="h-5 w-5">
        <path d="M10 0.500q4.500 2.500 9 2.500 0.500 11-9 16.500Q0.500 14 1 3q4.500 0 9-2.500z" fill="#2b6df0" stroke="#fff" strokeWidth="1.200" />
        <path d="M4 7l6 5 6-5-1 4-5 4-5-4z" fill="#fff" />
      </svg>
    </Tray>
    <Tray label="电池">
      <svg viewBox="0 0 20 14" className="h-[14px] w-5">
        <path d="M4.500 4.500h13v8h-13zM18 7h1.500v3H18" fill="none" stroke="#e8e8e8" strokeWidth="1.200" />
        <path d="M6 6h10v5H6z" fill="#fff" />
        <path d="M1 1v3h3V1M2.500 4v7H5" fill="none" stroke="#e8e8e8" strokeWidth="1.200" />
      </svg>
    </Tray>
    <Tray label="网络">
      <svg viewBox="0 0 18 18" className="h-[18px] w-[18px]" fill="none" stroke="#d0d0d0" strokeWidth="1.300">
        <path d="M1 16Q1 2 16 2M5 16.500Q5 6 16 6M9 16.500Q9 10 16 10" />
        <circle cx="14.500" cy="15" r="1.500" fill="#fff" />
      </svg>
    </Tray>
    <Tray label="输入法"><span className="text-[15px]">中</span></Tray>
    <button aria-label="搜狗输入法" className="flex w-10 items-center justify-center">
      <svg viewBox="0 0 20 20" className="h-5 w-5">
        <path d="M0.500 3L16 0.500 19.500 16 4 19.500z" fill="#ea4d22" />
        <path d="M14.500 5.500q-8-1.500-8.500 1.500c0 3 8.500 1.500 8.500 5 0 3-7 3-9.500 1.500" fill="none" stroke="#fff" strokeWidth="2.600" />
      </svg>
    </button>
    <button className="flex w-[98px] flex-col items-center justify-center pb-0.5 text-[15px] leading-6">
      <span>1:04:50</span>
      <span>2019/3/14</span>
    </button>
    <div className="w-1 border-l border-[#555]"></div>
  </div>
)

const App: React.FC = () => {
  return (
    <div className={clsx('flex h-screen flex-col overflow-hidden bg-white', UI)}>
      <TitleBar />
      <TabRow />
      <Ribbon />
      <main className="flex min-h-0 flex-1 bg-linear-to-b from-[#cdd0d5] via-[#c5c8cd] to-[#b8bbbe]">
        <div className="flex min-w-0 flex-1 flex-col overflow-hidden">
          <Page />
        </div>
        <ScrollBar />
      </main>
      <StatusBar />
      <TaskBar />
    </div>
  )
}

export default App
